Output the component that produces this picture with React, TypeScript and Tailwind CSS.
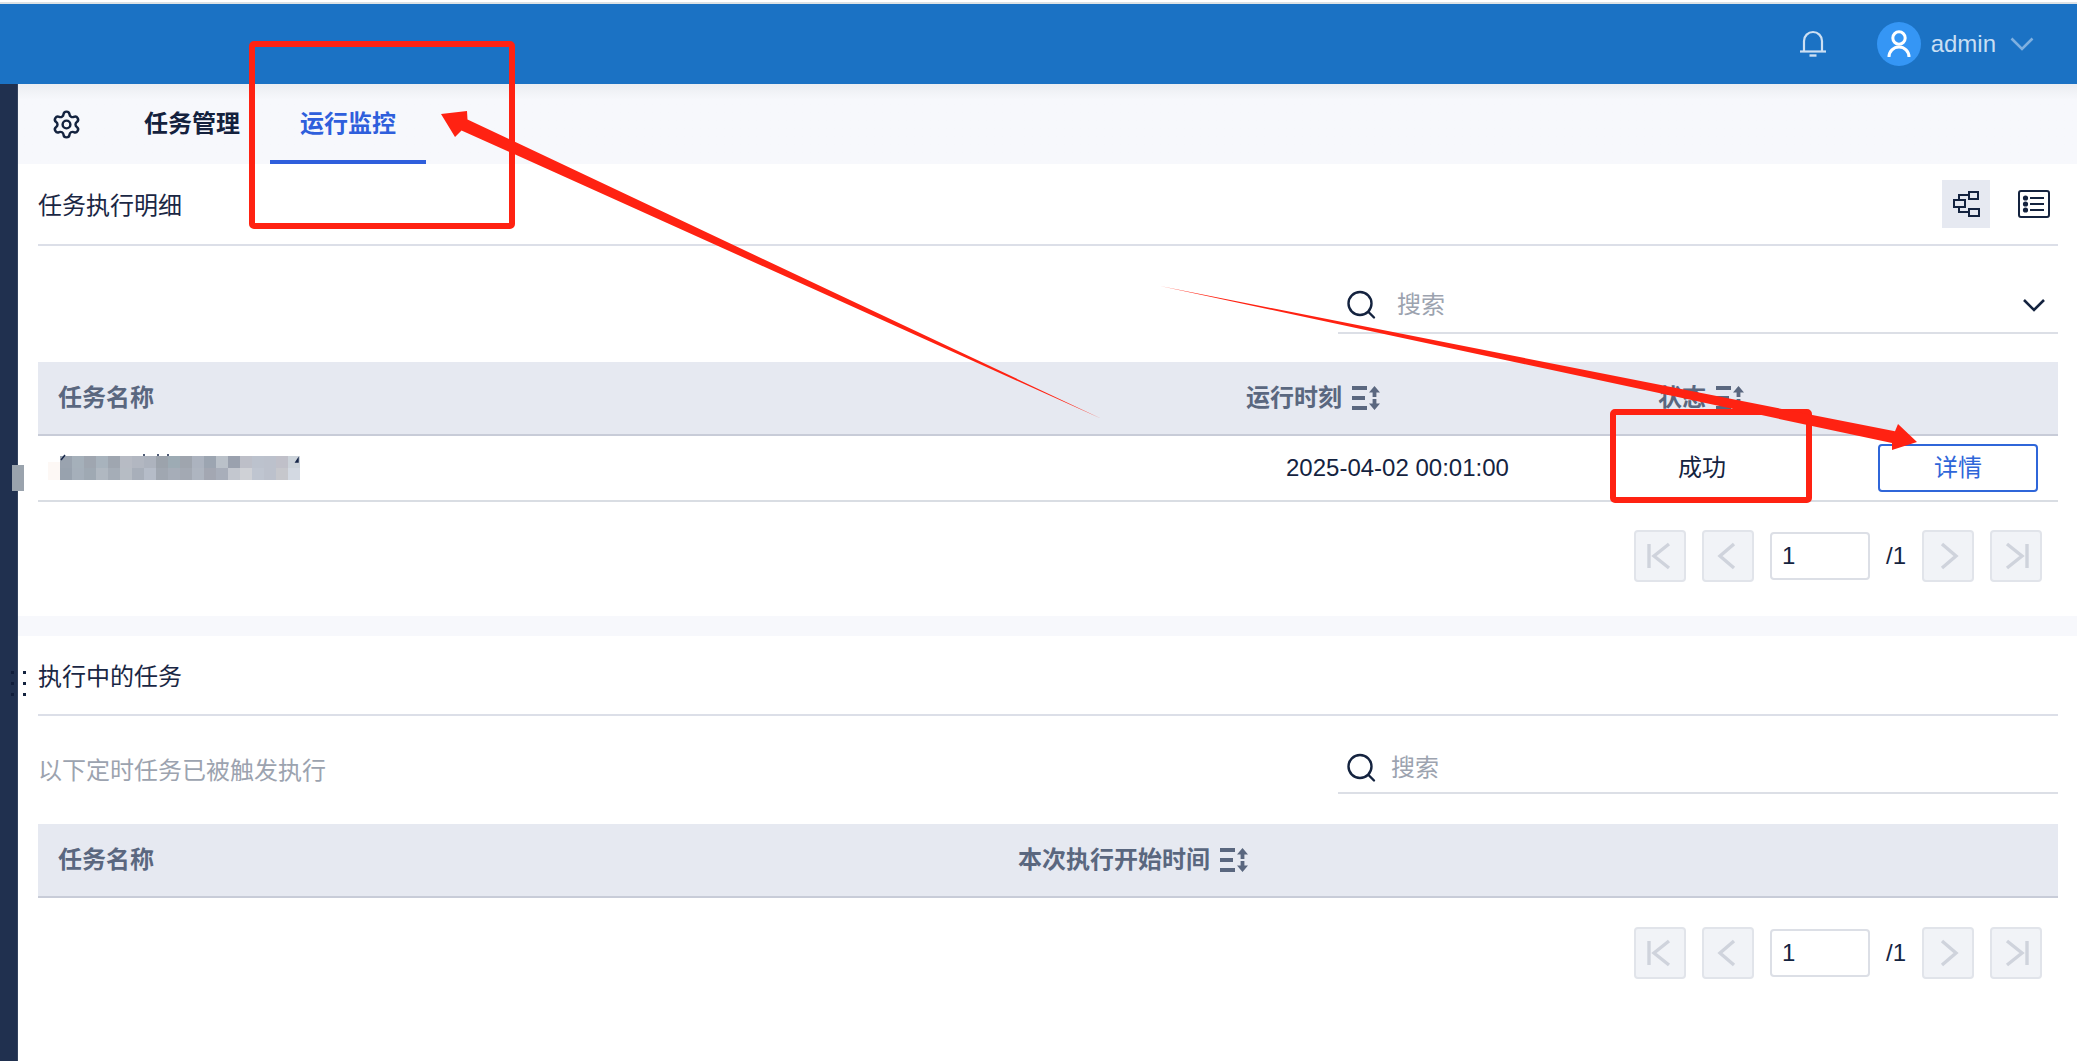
import React from 'react';
import { Settings } from 'lucide-react';

const MOSAIC = [
    '#9aa3af', '#a5b0ba', '#9fa6b0', '#a8b3bd', '#9fa6b0', '#b7bbc4', '#b2b7c1', '#adb3be', '#9ca3ac', '#9dabb4',
    '#9fa5ae', '#acb3bf', '#9ca5b1', '#bac1c9', '#9aa1ae', '#bdbfc8', '#bcc2cd', '#bcc1cc', '#c0c0c9', '#ccd3da',
    '#98a2ae', '#a5afba', '#9fa9b3', '#b0b8c1', '#a5adb7', '#b6bcc4', '#a8afba', '#b5bcc8', '#a0a7b1', '#a6adb8',
    '#a3a9b3', '#aeb5c0', '#a3a7b2', '#a8aeba', '#c3c7cf', '#cfd1d6', '#bfc5d0', '#bcc1cc', '#c6c7cc', '#d3d9e2',
];

const SortIcon = () => (
    <svg width="28" height="24" viewBox="0 0 28 24" className="shrink-0 text-[#5a677f]" fill="currentColor">
        <rect x="0" y="0" width="15" height="4" />
        <rect x="0" y="10" width="13" height="4" />
        <rect x="0" y="20" width="15" height="4" />
        <path d="M22.5 0l5.5 6.5h-3.6v4.5h-3.8V6.5H17z" />
        <path d="M22.5 24l5.5-6.5h-3.6V13h-3.8v4.5H17z" />
    </svg>
);

const SearchIcon = () => (
    <svg width="30" height="30" viewBox="0 0 30 30" fill="none" stroke="#14233f" strokeWidth="2.4" className="shrink-0">
        <circle cx="14" cy="13.5" r="11.5" />
        <path d="M22.5 22l5.5 5.5" strokeLinecap="round" />
    </svg>
);

const PAGER_ICONS = {
    first: 'M9 9v24M29 9L14 21l15 12',
    prev: 'M26 9L12 21l14 12',
    next: 'M14 9l14 12-14 12',
    last: 'M11 9l15 12-15 12M31 9v24',
};

const PagerButton: React.FC<{ icon: keyof typeof PAGER_ICONS }> = ({ icon }) => (
    <div className="w-[52px] h-[52px] flex items-center justify-center rounded-[4px] border-2 border-[#e1e4ea] bg-[#f1f3f7]">
        <svg width="40" height="42" viewBox="0 0 40 42" fill="none" stroke="#cfd3dc" strokeWidth="3.4">
            <path d={PAGER_ICONS[icon]} />
        </svg>
    </div>
);

const Pager = () => (
    <div className="flex items-center justify-end pr-4">
        <PagerButton icon="first" />
        <div className="ml-4">
            <PagerButton icon="prev" />
        </div>
        <input
            readOnly
            value="1"
            className="ml-4 w-[100px] h-[48px] px-[10px] rounded-[4px] border-2 border-[#dcdfe6] bg-white text-2xl text-[#14233f] outline-none"
        />
        <span className="ml-4 w-[18px] text-2xl text-[#14233f]">/1</span>
        <div className="ml-[18px]">
            <PagerButton icon="next" />
        </div>
        <div className="ml-4">
            <PagerButton icon="last" />
        </div>
    </div>
);

const SectionTitle: React.FC<{ title: string; height: string; children?: React.ReactNode }> = ({ title, height, children }) => (
    <div className={`${height} flex items-center justify-between border-b-2 border-[#dcdfe8] text-2xl text-[#1a2744]`}>
        <span className="mt-1">{title}</span>
        {children}
    </div>
);

export default function App() {
    return (
        <div className="relative w-[2077px] h-[1061px] overflow-hidden bg-white font-['Liberation_Sans','Noto_Sans_CJK_SC',sans-serif]">
            <div className="h-[2px] bg-white" />
            <div className="h-[2px] bg-[#dde2e5]" />

            {/* Header */}
            <header className="h-[80px] bg-[#1b72c4] flex items-center justify-end text-[#c9dff3]">
                <svg width="28" height="28" viewBox="0 0 28 28" fill="none" stroke="#cde0f3" strokeWidth="2.2" className="mr-[50px] mb-[2px]">
                    <path d="M5 22V12a9 9 0 0 1 18 0v10" />
                    <path d="M1 22.5h26" />
                    <path d="M10.5 26.5h7" strokeWidth="2.4" />
                </svg>
                <div className="w-[44px] h-[44px] rounded-full bg-[#3596f5] flex items-center justify-center">
                    <svg width="44" height="44" viewBox="0 0 44 44" fill="none" stroke="#fff" strokeWidth="3">
                        <circle cx="22" cy="16" r="6.2" />
                        <path d="M12 35a10 10 0 0 1 20 0" />
                    </svg>
                </div>
                <span className="ml-[10px] text-2xl">admin</span>
                <svg width="24" height="14" viewBox="0 0 24 14" fill="none" stroke="#7fb0e0" strokeWidth="2.6" className="ml-[14px] mr-[43px]">
                    <path d="M1.5 1.5L12 12 22.5 1.5" />
                </svg>
            </header>

            <div className="flex h-[977px]">
                {/* Collapsed sidebar */}
                <aside className="w-[18px] shrink-0 bg-[#20304f] border-r border-[#33435f]" />

                <main className="flex-1 min-w-0 flex flex-col">
                    {/* Tabs */}
                    <nav className="h-[80px] flex bg-linear-to-b from-[#ebedf1] to-[#f7f8fc] to-20%">
                        <div className="w-[96px] flex items-center pl-[33px]">
                            <Settings size={31} strokeWidth={1.9} className="text-[#14233f]" />
                        </div>
                        <div className="w-[156px] px-[30px] flex items-center text-2xl font-bold text-[#14213d]">任务管理</div>
                        <div className="w-[156px] px-[30px] flex items-center text-2xl font-bold text-[#2f5fdc] border-b-4 border-[#2f5fdc] pt-[4px]">
                            运行监控
                        </div>
                    </nav>

                    {/* Execution details */}
                    <section className="h-[452px] pl-5 pr-[19px]">
                        <SectionTitle title="任务执行明细" height="h-[82px]">
                            <div className="flex items-center pr-2">
                                <div className="w-[48px] h-[48px] bg-[#e6e9f1] flex items-center justify-center">
                                    <svg width="28" height="26" viewBox="0 0 28 26" fill="none" stroke="#14233f" strokeWidth="2">
                                        <rect x="2" y="9" width="11" height="7" />
                                        <rect x="17" y="1" width="9" height="7" />
                                        <rect x="17" y="18" width="10" height="7" />
                                        <path d="M7 9V4h10M7 16v5h10" />
                                    </svg>
                                </div>
                                <svg width="32" height="28" viewBox="0 0 32 28" fill="none" stroke="#14233f" strokeWidth="2" className="ml-7">
                                    <rect x="1" y="1" width="30" height="26" rx="2" />
                                    <path d="M12 8h14M12 14h14M12 20h14" />
                                    <circle cx="7.5" cy="8" r="1.6" fill="#14233f" />
                                    <circle cx="7.5" cy="14" r="1.6" fill="#14233f" />
                                    <circle cx="7.5" cy="20" r="1.6" fill="#14233f" />
                                </svg>
                            </div>
                        </SectionTitle>

                        <div className="mt-8 flex justify-end">
                            <div className="w-[720px] h-[56px] flex items-center pl-[8px] pr-3 border-b-2 border-[#dcdfe6]">
                                <SearchIcon />
                                <input
                                    readOnly
                                    placeholder="搜索"
                                    className="ml-[21px] flex-1 min-w-0 text-2xl outline-none placeholder:text-[#9ca3af]"
                                />
                                <svg width="24" height="14" viewBox="0 0 24 14" fill="none" stroke="#14233f" strokeWidth="2.6">
                                    <path d="M2 2l10 10L22 2" />
                                </svg>
                            </div>
                        </div>

                        <div className="mt-7 grid grid-cols-[1208px_412px_1fr] h-[74px] items-center bg-[#e6e9f1] border-b-2 border-[#c8ccd8] text-2xl font-bold text-[#5a677f]">
                            <span className="pl-5">任务名称</span>
                            <span className="flex items-center gap-[10px]">运行时刻 <SortIcon /></span>
                            <span className="flex items-center gap-[10px]">状态 <SortIcon /></span>
                        </div>
                        <div className="grid grid-cols-[1208px_412px_1fr] h-[66px] items-center border-b-2 border-[#d9dde3] text-2xl text-[#14233f]">
                            <div className="pl-[22px]">
                                <div className="grid grid-cols-[repeat(20,12px)] w-[240px]">
                                    {MOSAIC.map((color, idx) => (
                                        <span key={idx} className="h-3" style={{ backgroundColor: color }} />
                                    ))}
                                </div>
                            </div>
                            <span className="pl-10">2025-04-02 00:01:00</span>
                            <div className="flex items-center justify-between pl-5 pr-5">
                                <span>成功</span>
                                <button className="w-[160px] h-[48px] rounded-[4px] border-2 border-[#2f66d9] text-2xl text-[#2f66d9]">详情</button>
                            </div>
                        </div>
                        <div className="mt-7">
                            <Pager />
                        </div>
                    </section>

                    <div className="h-[20px] bg-[#f7f8fc]" />

                    {/* Running tasks */}
                    <section className="flex-1 pl-5 pr-[19px]">
                        <SectionTitle title="执行中的任务" height="h-[80px]" />
                        <div className="mt-[22px] h-[56px] flex items-center justify-between">
                            <span className="mt-[10px] text-2xl text-[#9ca3af]">以下定时任务已被触发执行</span>
                            <div className="w-[720px] h-[56px] flex items-center pl-[8px] pt-[6px] border-b-2 border-[#dcdfe6]">
                                <SearchIcon />
                                <input
                                    readOnly
                                    placeholder="搜索"
                                    className="ml-[15px] flex-1 min-w-0 text-2xl outline-none placeholder:text-[#9ca3af]"
                                />
                            </div>
                        </div>
                        <div className="mt-[30px] grid grid-cols-[980px_1fr] h-[74px] items-center bg-[#e6e9f1] border-b-2 border-[#c8ccd8] text-2xl font-bold text-[#5a677f]">
                            <span className="pl-5">任务名称</span>
                            <span className="flex items-center gap-[10px]">本次执行开始时间 <SortIcon /></span>
                        </div>
                        <div className="mt-[29px]">
                            <Pager />
                        </div>
                    </section>
                </main>
            </div>

            {/* Marks drawn over the screenshot */}
            <div className="absolute left-[249px] top-[41px] w-[266px] h-[188px] rounded-[5px] border-[6px] border-[#ff2212]" />
            <div className="absolute left-[1610px] top-[409px] w-[202px] h-[94px] rounded-[5px] border-[6px] border-[#ff2212]" />
            <svg className="absolute left-0 top-0 pointer-events-none" width="2077" height="1061" viewBox="0 0 2077 1061">
                <polygon fill="#ff2212" points="1102,419 467.5,119.5 467,111 441,114 455,137 461.5,130.4" />
                <polygon fill="#ff2212" points="1160,286 1895,431.3 1898,424 1917,442 1892,450 1892,443.1" />
                <rect x="12" y="465" width="12" height="26" fill="#9aa3ad" />
                <rect x="48" y="462" width="12" height="18" fill="#fdf8f5" />
                <g fill="#14233f">
                    <rect x="23" y="671" width="3" height="3" />
                    <rect x="23" y="682" width="3" height="3" />
                    <rect x="23" y="693" width="3" height="3" />
                </g>
                <g fill="#101d3a">
                    <rect x="11" y="671" width="3" height="3" />
                    <rect x="11" y="682" width="3" height="3" />
                    <rect x="11" y="693" width="3" height="3" />
                </g>
                <path d="M61 460l4-5M144 456v-2M158 456v-2M168 456v-2M296 462l2-3v3z" stroke="#17274a" strokeWidth="1.5" fill="none" />
            </svg>
        </div>
    );
}
